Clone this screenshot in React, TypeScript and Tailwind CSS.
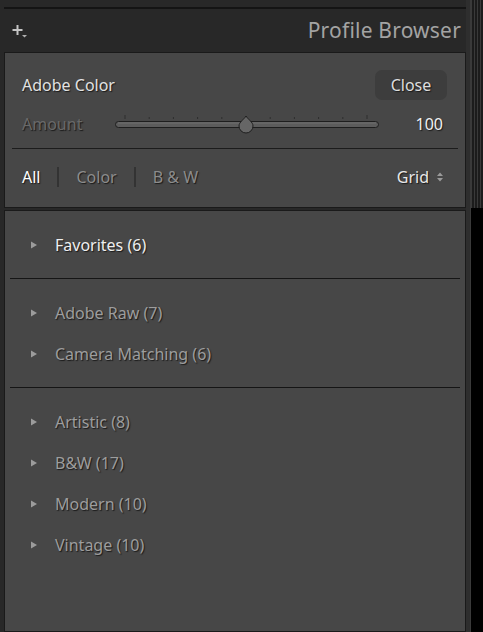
import React from "react";

const groups: { items: string[]; bright?: boolean }[] = [
  { items: ["Favorites (6)"], bright: true },
  { items: ["Adobe Raw (7)", "Camera Matching (6)"] },
  { items: ["Artistic (8)", "B&W (17)", "Modern (10)", "Vintage (10)"] },
];

const shadow = "[text-shadow:1px_1px_1px_#1a1a1a]";

const Disclosure = () => (
  <svg width="10" height="10" viewBox="0 0 10 10" className="shrink-0">
    <path d="M2 1.5 L8 5 L2 8.5 Z" fill="#9c9c9c" />
  </svg>
);

const AmountSlider = () => {
  const ticks = Array.from({ length: 11 }, (_, i) => 10 + i * 24.2);
  return (
    <svg width="266" height="22" viewBox="0 0 266 22">
      {ticks.map((x, i) => (
        <line
          key={i}
          x1={x}
          x2={x}
          y1={i === 0 || i === 10 ? 2 : 4}
          y2={6}
          stroke="#2e2e2e"
          strokeWidth="1"
        />
      ))}
      <rect x="0.5" y="8.5" width="263" height="6" rx="3" fill="#5c5c5c" stroke="#1e1e1e" />
      <line x1="3" x2="261" y1="10" y2="10" stroke="#6e6e6e" />
      <path
        d="M131 3 C133 6.5 138 9 138 13 A7 7 0 0 1 124 13 C124 9 129 6.5 131 3 Z"
        fill="#666"
        stroke="#1e1e1e"
        strokeWidth="1"
      />
    </svg>
  );
};

export default function App() {
  return (
    <div
      className="w-[483px] h-[632px] bg-[#282828] flex overflow-hidden"
      style={{ fontFamily: '"Noto Sans", "Open Sans", sans-serif' }}
    >
      <div className="w-[466px] flex flex-col pt-[7px] pl-[4px]">
        <div className="h-[2px] bg-[#141414]" />
        <div className="h-[43px] flex items-center justify-between pl-[8px] pr-[5px]">
          <svg width="18" height="14" viewBox="0 0 18 14">
            <path d="M5.5 1 V11 M0.5 6 H10.5" stroke="#c4c4c4" strokeWidth="2" />
            <path d="M10 11 H15 L12.5 13.5 Z" fill="#b0b0b0" />
          </svg>
          <span className="text-[21px] text-[#a3a3a3] leading-none tracking-[0.2px]">Profile Browser</span>
        </div>

        <div className="h-[156px] bg-[#474747] border border-[#1a1a1a] flex flex-col px-[6px]">
          <div className="flex items-center justify-between pl-[11px] pr-[12px] pt-[17px]">
            <span className={`text-[16px] text-[#e2e2e2] ${shadow}`}>Adobe Color</span>
            <button className={`h-[30px] w-[72px] rounded-[7px] bg-[#3d3d3d] text-[16px] text-[#dedede] ${shadow}`}>
              Close
            </button>
          </div>
          <div className="flex items-center pl-[11px] pr-[16px] mt-[12px]">
            <span className={`w-[93px] text-[16px] text-[#696969] ${shadow}`}>Amount</span>
            <AmountSlider />
            <span className={`ml-auto text-[16px] text-[#f0f0f0] ${shadow}`}>100</span>
          </div>
          <div className="h-px bg-[#1c1c1c] mx-[1px] mt-[12px]" />
          <div className="flex items-center pl-[11px] pr-[15px] h-[56px]">
            <span className={`text-[16px] text-white ${shadow}`}>All</span>
            <span className="w-[2px] h-[20px] bg-[#333] mx-[17px]" />
            <span className={`text-[16px] text-[#8c8c8c] ${shadow}`}>Color</span>
            <span className="w-[2px] h-[20px] bg-[#333] mx-[17px]" />
            <span className={`text-[16px] text-[#8c8c8c] ${shadow}`}>B &amp; W</span>
            <span className={`ml-auto text-[16px] text-[#e8e8e8] ${shadow}`}>Grid</span>
            <svg width="8" height="10" viewBox="0 0 8 10" className="ml-[7px]">
              <path d="M4 0.5 L7 4 H1 Z M4 9.5 L7 6 H1 Z" fill="#9a9a9a" />
            </svg>
          </div>
        </div>

        <div className="h-[2px]" />

        <div className="flex-1 bg-[#474747] border border-[#1a1a1a] px-[5px]">
          {groups.map((g, gi) => (
            <div key={gi} className={gi > 0 ? "border-t border-[#151515]" : ""}>
              <div className="py-[13px]">
                {g.items.map((name) => (
                  <div key={name} className="h-[41px] flex items-center pl-[19px]">
                    <Disclosure />
                    <span
                      className={`ml-[16px] text-[16px] ${g.bright ? "text-[#efefef]" : "text-[#9d9d9d]"} ${shadow}`}
                    >
                      {name}
                    </span>
                  </div>
                ))}
              </div>
            </div>
          ))}
        </div>
      </div>

      <div className="flex-1 flex">
        <div className="w-[4px] bg-[#2e2e2e]" />
        <div className="w-px bg-[#3a3a3a]" />
        <div className="flex-1 flex flex-col">
          <div className="h-[208px] bg-[repeating-linear-gradient(90deg,#3a3a3a_0px,#3a3a3a_1px,#1c1c1c_1px,#1c1c1c_3px)]" />
          <div className="flex-1 bg-black" />
        </div>
      </div>
    </div>
  );
}
